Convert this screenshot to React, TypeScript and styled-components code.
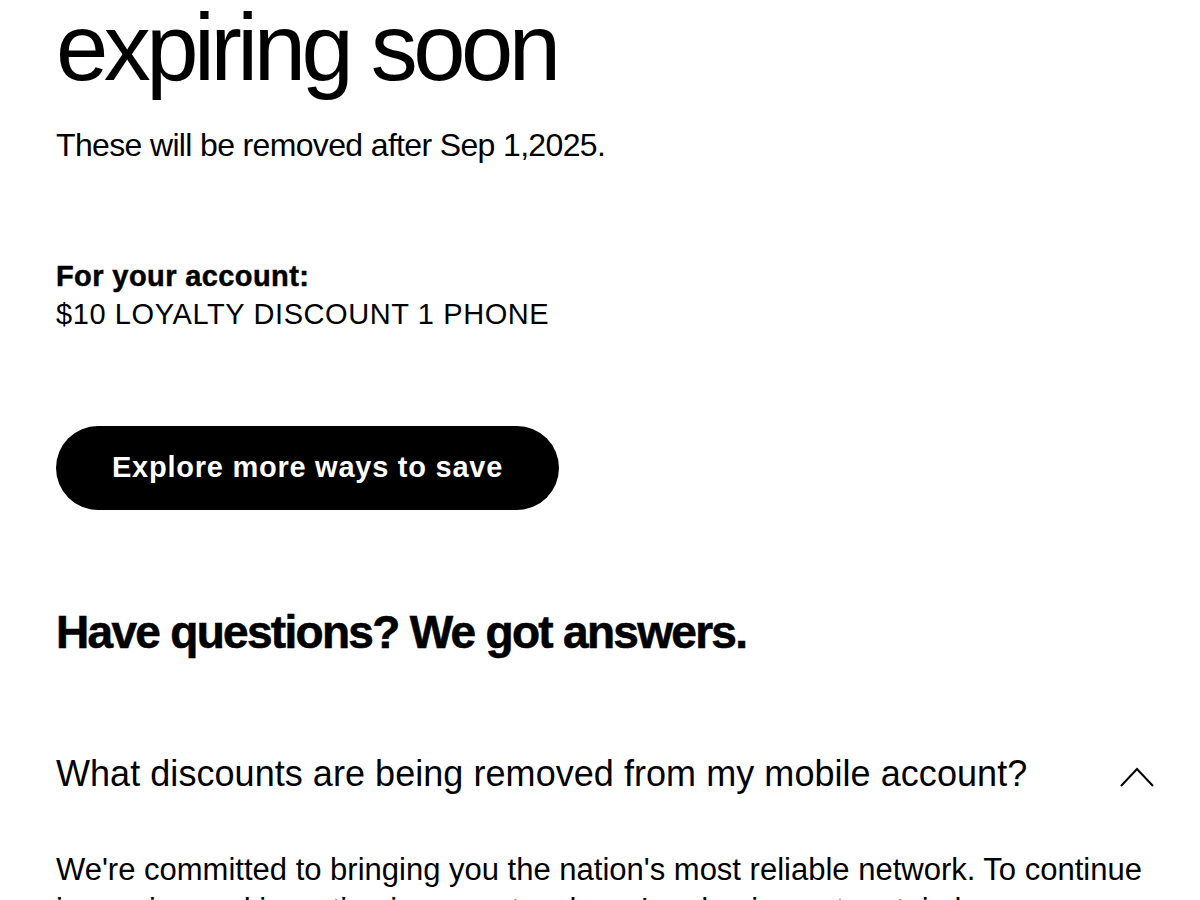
import React from "react";
import styled, { createGlobalStyle } from "styled-components";

const Global = createGlobalStyle`
  html, body { margin: 0; padding: 0; background: #ffffff; }
  html { height: 900px; overflow: hidden; }
  body { font-family: "Liberation Sans", Arial, Helvetica, sans-serif; color: #000000; }
  * { box-sizing: border-box; }
`;

const Page = styled.main`
  width: 1200px;
  padding: 0 46px 0 56px;
  display: flex;
  flex-direction: column;
  & > * { flex-shrink: 0; }
`;

const Title = styled.h1`
  margin: 0;
  font-size: 94px;
  line-height: 96px;
  font-weight: 400;
  letter-spacing: -4.5px;
`;

const Subtitle = styled.p`
  margin: 29px 0 0;
  font-size: 32px;
  line-height: 40px;
  letter-spacing: -0.65px;
`;

const Account = styled.div`
  margin-top: 92px;
  display: flex;
  flex-direction: column;
`;

const AccountLine = styled.span<{ $bold?: boolean }>`
  font-size: 29px;
  line-height: 38px;
  font-weight: ${(p) => (p.$bold ? 700 : 400)};
  letter-spacing: ${(p) => (p.$bold ? "0.4px" : "0.6px")};
  -webkit-text-stroke: ${(p) => (p.$bold ? "0.5px #000" : "0")};
`;

const PillButton = styled.button`
  margin-top: 93px;
  align-self: flex-start;
  width: 503px;
  height: 84px;
  border: none;
  border-radius: 42px;
  background: #000000;
  color: #ffffff;
  font-family: inherit;
  font-size: 29px;
  font-weight: 700;
  letter-spacing: 0.75px;
  cursor: pointer;
  display: flex;
  align-items: center;
  justify-content: center;
  padding: 0 0 2px;
`;

const SectionTitle = styled.h2`
  margin: 94px 0 0;
  font-size: 46px;
  line-height: 56px;
  font-weight: 700;
  letter-spacing: -1.7px;
  -webkit-text-stroke: 0.6px #000;
`;

const QuestionRow = styled.div`
  margin-top: 92px;
  display: flex;
  align-items: center;
  justify-content: space-between;
`;

const Question = styled.h3`
  margin: 0;
  font-size: 36px;
  line-height: 44px;
  font-weight: 400;
  letter-spacing: 0.05px;
`;

const Chevron = styled.svg`
  width: 34px;
  height: 21px;
  flex: none;
  margin-top: 4px;
`;

const Answer = styled.p`
  margin: 54px 0 0;
  font-size: 31px;
  line-height: 40px;
  letter-spacing: 0;
`;

export default function App() {
  return (
    <>
      <Global />
      <Page>
        <Title>expiring soon</Title>
        <Subtitle>These will be removed after Sep 1,2025.</Subtitle>
        <Account>
          <AccountLine $bold>For your account:</AccountLine>
          <AccountLine>$10 LOYALTY DISCOUNT 1 PHONE</AccountLine>
        </Account>
        <PillButton>Explore more ways to save</PillButton>
        <SectionTitle>Have questions? We got answers.</SectionTitle>
        <QuestionRow>
          <Question>What discounts are being removed from my mobile account?</Question>
          <Chevron viewBox="0 0 34 21" fill="none">
            <polyline points="1,20 17,3 33,20" stroke="#000" strokeWidth="2" />
          </Chevron>
        </QuestionRow>
        <Answer>
          We're committed to bringing you the nation's most reliable network. To continue
          improving and investing in our network, we're phasing out certain legacy
          discounts on mobile accounts.
        </Answer>
      </Page>
    </>
  );
}
